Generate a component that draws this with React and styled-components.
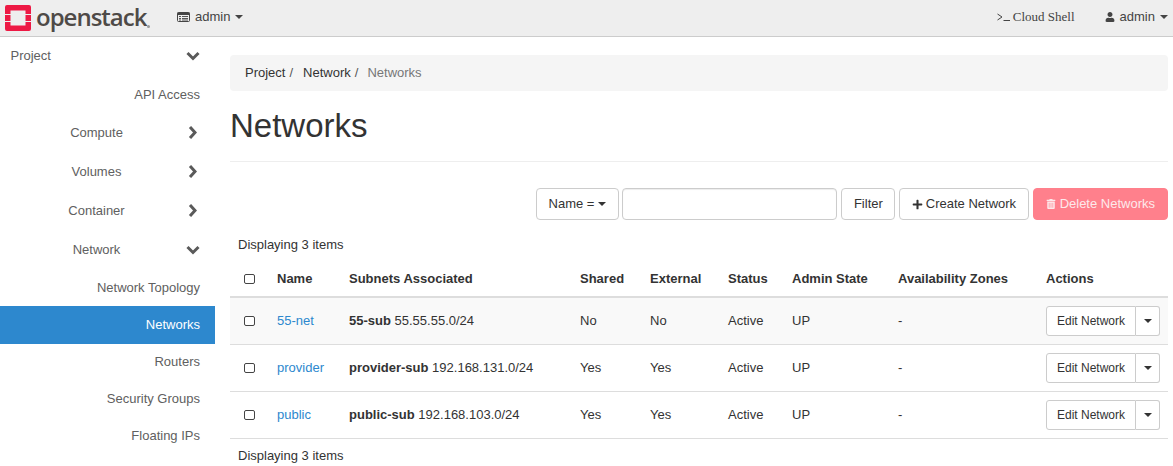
import React from "react";
import styled, { createGlobalStyle } from "styled-components";
import { FaUser, FaPlus, FaTrashAlt } from "react-icons/fa";

const GlobalStyle = createGlobalStyle`
  html, body {
    margin: 0;
    padding: 0;
    background: #fff;
    overflow: hidden;
  }
  body {
    font-family: "Liberation Sans", Arial, sans-serif;
    font-size: 13px;
    line-height: 18px;
    color: #333;
  }
  * {
    box-sizing: border-box;
  }
`;

const Page = styled.div`
  width: 1173px;
  height: 466px;
  overflow: hidden;
`;

const Navbar = styled.header`
  height: 37px;
  display: flex;
  align-items: center;
  background: #eee;
  border-bottom: 1px solid #ccc;
  padding: 0 5px 0 5px;
`;

const Brand = styled.div`
  display: flex;
  align-items: center;
  width: 172px;
`;

const BrandName = styled.span`
  font-family: "Open Sans", sans-serif;
  font-size: 24px;
  font-weight: 600;
  line-height: 36px;
  letter-spacing: -1px;
  color: #4e4a47;
  margin-left: 5px;
  margin-top: -3px;
`;

const BrandMark = styled.span`
  width: 3px;
  height: 3px;
  border-radius: 50%;
  background: #9a9a9a;
  margin: 16px 0 0 1px;
`;

const NavItem = styled.div`
  display: flex;
  align-items: center;
  gap: ${(p) => p.$gap || 5}px;
  color: #444;
  font-size: 13px;
  margin-left: ${(p) => p.$left || 0}px;
  margin-top: -2px;
`;

const ShellLabel = styled.span`
  font-family: "Liberation Serif", serif;
  font-size: 13px;
  color: #444;
`;

const Spacer = styled.div`
  flex: 1;
`;

const Caret = styled.span`
  display: inline-block;
  width: 0;
  height: 0;
  border-top: 4px solid currentColor;
  border-left: 4px solid transparent;
  border-right: 4px solid transparent;
`;

const Body = styled.div`
  display: flex;
`;

const Sidebar = styled.nav`
  width: 215px;
  flex: none;
  color: #606060;
  font-size: 13px;
`;

const GroupRow = styled.div`
  height: ${(p) => p.$height || 39}px;
  display: flex;
  align-items: center;
  padding-right: 15px;
`;

const GroupLabel = styled.span`
  flex: 1;
  text-align: ${(p) => (p.$left ? "left" : "center")};
  padding-left: ${(p) => (p.$left ? 10.5 : 8)}px;
`;

const ChevronSlot = styled.span`
  width: 15px;
  display: flex;
  justify-content: center;
`;

const SubRow = styled.div`
  height: ${(p) => p.$height || 37}px;
  display: flex;
  align-items: center;
  justify-content: flex-end;
  padding: ${(p) => p.$nudge || 0}px 15px 0 0;
  background: ${(p) => (p.$active ? "#2d88ce" : "transparent")};
  color: ${(p) => (p.$active ? "#fff" : "#606060")};
`;

const Main = styled.main`
  flex: 1;
  min-width: 0;
  padding: 18px 5px 0 15px;
`;

const Breadcrumb = styled.div`
  height: 36px;
  display: flex;
  align-items: center;
  background: #f5f5f5;
  border-radius: 4px;
  padding: 0 15px;
  color: #333;
`;

const Crumb = styled.span`
  color: ${(p) => (p.$muted ? "#777" : "#333")};
`;

const CrumbSep = styled.span`
  color: #555;
  padding: 0 ${(p) => p.$right}px 0 4px;
`;

const PageHeader = styled.div`
  height: 71px;
  padding-top: 15px;
  border-bottom: 1px solid #eee;
`;

const Title = styled.h1`
  margin: 0;
  font-size: 33px;
  font-weight: 400;
  line-height: 40px;
  color: #333;
`;

const Toolbar = styled.div`
  display: flex;
  justify-content: flex-end;
  margin-top: 26px;
  height: 32px;
`;

const Button = styled.button`
  height: 32px;
  display: inline-flex;
  align-items: center;
  gap: ${(p) => p.$gap || 0}px;
  padding: 0 ${(p) => p.$pad || 12}px;
  background: ${(p) => (p.$danger ? "#ff808c" : "#fff")};
  color: ${(p) => (p.$danger ? "#fde9eb" : "#333")};
  border: 1px solid ${(p) => (p.$danger ? "#ff808c" : "#ccc")};
  border-radius: 4px;
  font: inherit;
  margin-left: ${(p) => p.$left || 0}px;
`;

const SearchInput = styled.input`
  width: 215px;
  height: 32px;
  margin-left: 3px;
  border: 1px solid #ccc;
  border-radius: 4px;
  box-shadow: inset 0 1px 1px rgba(0, 0, 0, 0.075);
  background: #fff;
`;

const Count = styled.div`
  height: 18px;
  padding-left: 8px;
  color: #333;
  margin-top: ${(p) => p.$top}px;
`;

const Table = styled.table`
  width: 938px;
  border-collapse: collapse;
  table-layout: fixed;
  margin-top: 8px;
  font-size: 13px;
`;

const HeadCell = styled.th`
  height: 35px;
  padding: 0 8px 0 ${(p) => (p.$first ? 15 : 8)}px;
  text-align: left;
  font-weight: 700;
  color: #333;
  border-bottom: 2px solid #ddd;
`;

const Row = styled.tr`
  background: ${(p) => (p.$striped ? "#f9f9f9" : "transparent")};
`;

const Cell = styled.td`
  height: 47px;
  padding: 0 8px 0 ${(p) => (p.$first ? 15 : 8)}px;
  border-bottom: 1px solid #ddd;
  color: #333;
`;

const Checkbox = styled.span`
  display: block;
  width: 11px;
  height: 10px;
  margin-left: -1px;
  border: 1.5px solid #444;
  border-radius: 2px;
  background: #fff;
`;

const NameLink = styled.a`
  color: #2d88ce;
  text-decoration: none;
`;

const ActionGroup = styled.div`
  display: inline-flex;
  height: 30px;
  font-size: 12px;
  vertical-align: middle;
`;

const ActionMain = styled.span`
  display: flex;
  align-items: center;
  padding: 0 10px;
  white-space: nowrap;
  border: 1px solid #ccc;
  border-radius: 3px 0 0 3px;
  background: #fff;
  color: #333;
`;

const ActionCaret = styled.span`
  display: flex;
  align-items: center;
  justify-content: center;
  width: 24px;
  border: 1px solid #ccc;
  border-left: 0;
  border-radius: 0 3px 3px 0;
  background: #fff;
  color: #333;
`;

const columns = [
  ["", 39],
  ["Name", 72],
  ["Subnets Associated", 231],
  ["Shared", 70],
  ["External", 78],
  ["Status", 64],
  ["Admin State", 106],
  ["Availability Zones", 148],
  ["Actions", 130],
];

const networks = [
  { name: "55-net", subnet: "55-sub", cidr: "55.55.55.0/24", shared: "No", external: "No" },
  { name: "provider", subnet: "provider-sub", cidr: "192.168.131.0/24", shared: "Yes", external: "Yes" },
  { name: "public", subnet: "public-sub", cidr: "192.168.103.0/24", shared: "Yes", external: "Yes" },
];

const Logo = () => (
  <svg width="26" height="26" viewBox="0 0 26 26">
    <path
      fill="#ed1944"
      d="M2 0h22a2 2 0 0 1 2 2v7h-5.5V5.5h-15V9H0V2a2 2 0 0 1 2-2zM0 17h5.5v3.5h15V17H26v7a2 2 0 0 1-2 2H2a2 2 0 0 1-2-2zM0 10h5.5v6H0zM20.5 10H26v6h-5.5z"
    />
  </svg>
);

const ProjectIcon = () => (
  <svg width="13" height="10" viewBox="0 0 13 10">
    <rect x="0.5" y="0.5" width="12" height="9" rx="1" fill="none" stroke="#444" />
    <rect x="0.5" y="0.5" width="12" height="2.5" fill="#444" />
    <path d="M2 4.5h2M5 4.5h6M2 6.5h2M5 6.5h6M2 8h2M5 8h6" stroke="#444" strokeWidth="0.9" />
  </svg>
);

const ShellIcon = () => (
  <svg width="13" height="10" viewBox="0 0 13 10">
    <path d="M0.5 2l4.5 3-4.5 3M6.5 8.5H13" fill="none" stroke="#444" strokeWidth="1" />
  </svg>
);

const ChevronDown = () => (
  <svg width="14" height="10" viewBox="0 0 14 10">
    <path d="M1.5 2l5.5 5.5L12.5 2" fill="none" stroke="#5a5a5a" strokeWidth="3" />
  </svg>
);

const ChevronRight = () => (
  <svg width="9" height="13" viewBox="0 0 9 13">
    <path d="M2 1l5 5.5L2 12" fill="none" stroke="#5a5a5a" strokeWidth="3" />
  </svg>
);

const App = () => (
  <Page>
    <GlobalStyle />
    <Navbar>
      <Brand>
        <Logo />
        <BrandName>openstack</BrandName>
        <BrandMark />
      </Brand>
      <NavItem>
        <ProjectIcon />
        admin
        <Caret />
      </NavItem>
      <Spacer />
      <NavItem $gap={3}>
        <ShellIcon />
        <ShellLabel>Cloud Shell</ShellLabel>
      </NavItem>
      <NavItem $left={30} $gap={5}>
        <FaUser size={10} />
        admin
        <Caret />
      </NavItem>
    </Navbar>
    <Body>
      <Sidebar>
        <GroupRow $height={38}>
          <GroupLabel $left>Project</GroupLabel>
          <ChevronSlot>
            <ChevronDown />
          </ChevronSlot>
        </GroupRow>
        <SubRow $height={38} $nudge={1}>API Access</SubRow>
        <GroupRow>
          <GroupLabel>Compute</GroupLabel>
          <ChevronSlot>
            <ChevronRight />
          </ChevronSlot>
        </GroupRow>
        <GroupRow>
          <GroupLabel>Volumes</GroupLabel>
          <ChevronSlot>
            <ChevronRight />
          </ChevronSlot>
        </GroupRow>
        <GroupRow>
          <GroupLabel>Container</GroupLabel>
          <ChevronSlot>
            <ChevronRight />
          </ChevronSlot>
        </GroupRow>
        <GroupRow>
          <GroupLabel>Network</GroupLabel>
          <ChevronSlot>
            <ChevronDown />
          </ChevronSlot>
        </GroupRow>
        <SubRow>Network Topology</SubRow>
        <SubRow $active $height={38}>Networks</SubRow>
        <SubRow $height={36}>Routers</SubRow>
        <SubRow>Security Groups</SubRow>
        <SubRow>Floating IPs</SubRow>
      </Sidebar>
      <Main>
        <Breadcrumb>
          <Crumb>Project</Crumb>
          <CrumbSep $right={10}>/</CrumbSep>
          <Crumb>Network</Crumb>
          <CrumbSep $right={9}>/</CrumbSep>
          <Crumb $muted>Networks</Crumb>
        </Breadcrumb>
        <PageHeader>
          <Title>Networks</Title>
        </PageHeader>
        <Toolbar>
          <Button $gap={4}>
            Name =
            <Caret />
          </Button>
          <SearchInput />
          <Button $left={4} $pad={11.5}>Filter</Button>
          <Button $left={4} $gap={3} $pad={11.5}>
            <FaPlus size={11} />
            Create Network
          </Button>
          <Button $left={4} $danger $gap={4}>
            <FaTrashAlt size={10} />
            Delete Networks
          </Button>
        </Toolbar>
        <Count $top={16}>Displaying 3 items</Count>
        <Table>
          <colgroup>
            {columns.map(([label, width]) => (
              <col key={label} style={{ width }} />
            ))}
          </colgroup>
          <thead>
            <tr>
              {columns.map(([label], i) => (
                <HeadCell key={label} $first={i === 0}>
                  {i === 0 ? <Checkbox /> : label}
                </HeadCell>
              ))}
            </tr>
          </thead>
          <tbody>
            {networks.map((net, i) => (
              <Row key={net.name} $striped={i === 0}>
                <Cell $first>
                  <Checkbox />
                </Cell>
                <Cell>
                  <NameLink>{net.name}</NameLink>
                </Cell>
                <Cell>
                  <b>{net.subnet}</b> {net.cidr}
                </Cell>
                <Cell>{net.shared}</Cell>
                <Cell>{net.external}</Cell>
                <Cell>Active</Cell>
                <Cell>UP</Cell>
                <Cell>-</Cell>
                <Cell>
                  <ActionGroup>
                    <ActionMain>Edit Network</ActionMain>
                    <ActionCaret>
                      <Caret />
                    </ActionCaret>
                  </ActionGroup>
                </Cell>
              </Row>
            ))}
          </tbody>
        </Table>
        <Count $top={8}>Displaying 3 items</Count>
      </Main>
    </Body>
  </Page>
);

export default App;
